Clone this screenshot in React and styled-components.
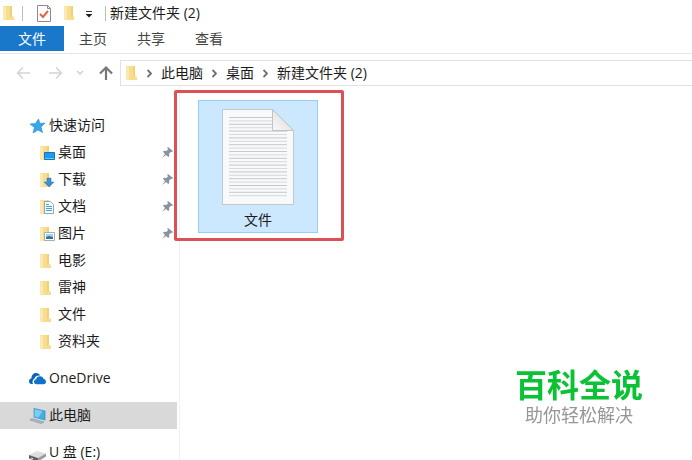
import styled, { createGlobalStyle } from "styled-components";

const GlobalStyle = createGlobalStyle`
  * {
    box-sizing: border-box;
  }
  body {
    margin: 0;
    background: #fff;
    color: #1b1b1b;
    font-family: "Open Sans", "Noto Sans CJK SC", sans-serif;
    font-size: 14px;
  }
  button {
    border: none;
    background: none;
    padding: 0;
    font: inherit;
    color: inherit;
  }
  svg {
    display: block;
    flex: none;
  }
`;
const Window = styled.div`
  display: flex;
  flex-direction: column;
  height: 100vh;
  overflow: hidden;
`;
const TitleBar = styled.header`
  display: flex;
  align-items: center;
  height: 26px;
  padding-left: 1px;
`;
const QuickTools = styled.div`
  display: flex;
  align-items: center;
  gap: 11px;
  padding: 0 12px 0 14px;
`;
const Divider = styled.span`
  width: 1px;
  height: 15px;
  background: #bdbdbd;
  margin-left: ${(props) => (props.$first ? "8px" : "0")};
`;
const Title = styled.h1`
  margin: 0 0 0 4px;
  font-size: 14px;
  line-height: 26px;
  font-weight: 400;
`;
const Tabs = styled.nav`
  display: flex;
  height: 28px;
  padding-bottom: 2px;
  border-bottom: 1px solid #e6e6e6;
`;
const Tab = styled.button`
  width: ${(props) => (props.$active ? "64px" : "58px")};
  height: 25px;
  line-height: 25px;
  color: ${(props) => (props.$active ? "#fff" : "#444")};
  background: ${(props) => (props.$active ? "#1a78cb" : "none")};
`;
const AddressRow = styled.div`
  display: flex;
  align-items: center;
  padding-top: 6px;
`;
const NavButtons = styled.div`
  display: flex;
  align-items: center;
  gap: 14px;
  width: 120px;
  padding-left: 16px;
`;
const AddressBar = styled.div`
  flex: 1;
  display: flex;
  align-items: center;
  gap: 9px;
  height: 26px;
  padding-left: 3px;
  border: 1px solid #e2e2e2;
  border-right: none;
`;
const Crumb = styled.button`
  line-height: 24px;
`;
const Main = styled.div`
  flex: 1;
  display: flex;
  min-height: 0;
`;
const Sidebar = styled.nav`
  width: 180px;
  flex: none;
  display: flex;
  flex-direction: column;
  gap: 10px;
  padding: 26px 2px 0 0;
  border-right: 1px solid #f1f1f1;
`;
const Group = styled.div`
  display: flex;
  flex-direction: column;
`;
const Row = styled.a`
  display: flex;
  align-items: center;
  flex: none;
  gap: 2px;
  height: 27px;
  padding: 0 3px 0 ${(props) => (props.$child ? "38px" : "29px")};
  color: inherit;
  text-decoration: none;
  background: ${(props) => (props.$selected ? "#d9d9d9" : "none")};
`;
const RowLabel = styled.span`
  flex: 1;
  line-height: 26px;
  padding-bottom: 1px;
`;
const Content = styled.main`
  flex: 1;
  padding: 14px 18px;
`;
const FileTile = styled.button`
  position: relative;
  display: flex;
  flex-direction: column;
  align-items: center;
  gap: 4px;
  width: 120px;
  height: 133px;
  padding-top: 8px;
  border: 1px solid #99cdf5;
  background: #cce8ff;
`;
const FileName = styled.span`
  line-height: 20px;
`;
const Highlight = styled.span`
  position: absolute;
  inset: -11px -27px -9px -25px;
  border: 3px solid #dd5156;
  border-radius: 2px;
`;
const Watermark = styled.aside`
  position: fixed;
  right: 49px;
  bottom: 34px;
  display: flex;
  flex-direction: column;
  align-items: center;
  font-family: "Noto Sans CJK SC", sans-serif;
`;
const Brand = styled.strong`
  color: #0bc134;
  font-size: 32px;
  line-height: 38px;
  font-weight: 700;
`;
const Slogan = styled.span`
  color: #969696;
  font-size: 18px;
  line-height: 24px;
`;

const FolderShape = () => (
  <>
    <path d="M2 2h9v10l2 1v3H2z" fill="#f9dd8f" />
    <path d="M2 2l3 1v13.500L2 16z" fill="#fbe9b2" />
    <path d="M9 2h2v10l-2 1z" fill="#f3cf76" />
  </>
);
const BADGES = {
  desktop: (
    <>
      <path d="M6.500 8.500h10v7h-10z" fill="#1e9bec" stroke="#1377bd" />
      <path d="M7 14.500h9" stroke="#6bc7fa" />
    </>
  ),
  download: (
    <path d="M9 7h4v4h3l-5 5-5-5h3z" fill="#3c8fd6" stroke="#2c75b6" strokeWidth=".5" />
  ),
  document: (
    <>
      <path d="M6.500 3.500h6l3 3v9h-9z" fill="#f4faff" stroke="#7697ad" strokeWidth=".8" />
      <path d="M8 6.500h3M8 8.500h6M8 10.500h6M8 12.500h6" stroke="#4f9dcc" />
    </>
  ),
  picture: (
    <>
      <path d="M6.500 7.500h10v8h-10z" fill="#fff" stroke="#9eb0bc" />
      <path d="M8 9h7v5H8z" fill="#9bd2f2" />
      <path d="M8 12l3-1 4 1v2H8z" fill="#38719c" />
    </>
  ),
};
const FolderIcon = ({ kind, width = 18 }) => (
  <svg width={width} height="18" viewBox={`0 0 ${width} 18`}>
    <FolderShape />
    {BADGES[kind]}
  </svg>
);
const PinIcon = () => (
  <svg width="13" height="13" viewBox="0 0 13 13">
    <path
      d="M7 1l5 4-1 1-1-.3-2 2 .3 2.300-1 1-2.300-2L1 12l3-4-2-2.300 1-1 2.300.3 2-2L6 2z"
      fill="#87939d"
    />
  </svg>
);
const StarIcon = () => (
  <svg width="18" height="18" viewBox="0 0 18 18">
    <path
      d="M9.500 2l1.500 4.500 5-.5-4 4 1.500 5.500L9 13l-5 3 1.500-5.500L1 7l5.500-.5z"
      fill="#37a7ec"
      stroke="#2187cc"
      strokeWidth=".6"
    />
  </svg>
);
const CloudIcon = () => (
  <svg width="18" height="18" viewBox="0 0 18 18">
    <path
      d="M0 11.500C0 10 1 8.500 2.500 8.300 2.500 5 4.500 3 7 3c2 0 3.500 1 4.300 2.500C8 5 6 6.500 5.300 8.700 3.500 9.500 3 12 4 14H2.500C1 14 0 13 0 11.500z"
      fill="#0f62b5"
    />
    <path
      d="M5 12c0-1.500 1-2.500 2.300-2.700C7.300 7.500 9 6.300 11 6.300c2 0 3.300 1.200 3.600 2.800C16 9.300 17 10.300 17 11.800c0 1.500-1 2.400-2.300 2.400H7.500C6 14.200 5 13.300 5 12z"
      fill="#0f72ca"
    />
  </svg>
);
const ComputerIcon = () => (
  <svg width="18" height="18" viewBox="0 0 18 18">
    <path d="M5 1.500l11 2.500v9L5 10z" fill="#42aee8" stroke="#3584b5" strokeWidth=".7" />
    <path d="M5.500 2.200l8 1.800-4 6.500-4-1z" fill="#7ccdf4" />
    <path d="M3 11.500l12 3.500-3 1.500L1 13z" fill="#a9bac7" stroke="#73899a" strokeWidth=".5" />
  </svg>
);
const DriveIcon = () => (
  <svg width="18" height="18" viewBox="0 0 18 18">
    <path d="M0 11l8-4 9 2.500L9 14z" fill="#dedede" />
    <path d="M0 11l9 3v3.500l-9-3z" fill="#606060" />
    <path d="M9 14l8-4.500v3L9 17.500z" fill="#999" />
    <path d="M2 14l2 .7" stroke="#e4f2e6" />
  </svg>
);
const TaskIcon = () => (
  <svg width="14" height="17" viewBox="0 0 14 17">
    <path d="M.5.5h10l3 3v13H.5z" fill="#fff" stroke="#8b8b8b" />
    <path d="M10.500.5v3h3" fill="none" stroke="#8b8b8b" />
    <path d="M3 9l3 3 5-6" fill="none" stroke="#df6540" strokeWidth="2" />
  </svg>
);
const MenuIcon = () => (
  <svg width="8" height="10" viewBox="0 0 8 10">
    <path d="M1 3.500h6" stroke="#333" />
    <path d="M.5 6h7L4 9.500z" fill="#222" />
  </svg>
);
const ARROWS = {
  left: "M14 8H1M7 2.500L1.500 8 7 13.500",
  right: "M3 8h13M10 2.500l5.500 5.500-5.500 5.500",
  up: "M8 15V3M2 8.500l6-6 6 6",
};
const Arrow = ({ to }) => (
  <svg width="16" height="16" viewBox="0 0 16 16">
    <path
      d={ARROWS[to]}
      fill="none"
      stroke={to === "up" ? "#777" : "#d3d3d3"}
      strokeWidth={to === "up" ? 2.2 : 1.5}
    />
  </svg>
);
const ChevronDown = () => (
  <svg width="8" height="8" viewBox="0 0 8 8">
    <path d="M1 2l3 3 3-3" fill="none" stroke="#d0d0d0" strokeWidth="1.500" />
  </svg>
);
const ChevronRight = () => (
  <svg width="5" height="9" viewBox="0 0 5 9">
    <path d="M.5 1L4 4.500.5 8" fill="none" stroke="#6e6e6e" strokeWidth="1.800" />
  </svg>
);
const PaperIcon = () => (
  <svg width="72" height="97" viewBox="0 0 72 97">
    <defs>
      <linearGradient id="fold" x1="0" y1="1" x2="1" y2="0">
        <stop offset="0" stopColor="#fafafa" />
        <stop offset="1" stopColor="#d4d4d4" />
      </linearGradient>
    </defs>
    <path d="M.5.5h50l21 21v74H.5z" fill="#f8f9fa" stroke="#c2c7ca" />
    {Array.from({ length: 24 }, (_, i) => (
      <path
        key={i}
        d={`M7 ${8.5 + i * 3.4}h${i < 4 ? 43 : 58}`}
        stroke={i % 2 ? "#d3d5d7" : "#bfc2c4"}
        strokeWidth=".9"
      />
    ))}
    <path d="M50.500.5l21 21h-21z" fill="url(#fold)" stroke="#bfc2c4" />
  </svg>
);

const folders = [
  { name: "桌面", kind: "desktop", pinned: true },
  { name: "下载", kind: "download", pinned: true },
  { name: "文档", kind: "document", pinned: true },
  { name: "图片", kind: "picture", pinned: true },
  { name: "电影" },
  { name: "雷神" },
  { name: "文件" },
  { name: "资料夹" },
];
const tabs = ["文件", "主页", "共享", "查看"];
const crumbs = ["此电脑", "桌面", "新建文件夹 (2)"];

export default function App() {
  return (
    <>
      <GlobalStyle />
      <Window>
        <TitleBar>
          <FolderIcon width={13} />
          <Divider $first />
          <QuickTools>
            <button aria-label="属性">
              <TaskIcon />
            </button>
            <button aria-label="新建文件夹">
              <FolderIcon width={12} />
            </button>
            <button aria-label="自定义快速访问工具栏">
              <MenuIcon />
            </button>
          </QuickTools>
          <Divider />
          <Title>新建文件夹 (2)</Title>
        </TitleBar>
        <Tabs>
          {tabs.map((tab, i) => (
            <Tab key={tab} $active={i === 0}>
              {tab}
            </Tab>
          ))}
        </Tabs>
        <AddressRow>
          <NavButtons>
            <button aria-label="后退">
              <Arrow to="left" />
            </button>
            <button aria-label="前进">
              <Arrow to="right" />
            </button>
            <button aria-label="最近位置">
              <ChevronDown />
            </button>
            <button aria-label="向上">
              <Arrow to="up" />
            </button>
          </NavButtons>
          <AddressBar>
            <FolderIcon width={14} />
            {crumbs.map((crumb) => [
              <ChevronRight key={crumb + "-sep"} />,
              <Crumb key={crumb}>{crumb}</Crumb>,
            ])}
          </AddressBar>
        </AddressRow>
        <Main>
          <Sidebar>
            <Group>
              <Row href="#quick">
                <StarIcon />
                <RowLabel>快速访问</RowLabel>
              </Row>
              {folders.map((folder) => (
                <Row key={folder.name} href={"#" + folder.name} $child>
                  <FolderIcon kind={folder.kind} />
                  <RowLabel>{folder.name}</RowLabel>
                  {folder.pinned && <PinIcon />}
                </Row>
              ))}
            </Group>
            <Row href="#onedrive">
              <CloudIcon />
              <RowLabel>OneDrive</RowLabel>
            </Row>
            <Row href="#computer" $selected>
              <ComputerIcon />
              <RowLabel>此电脑</RowLabel>
            </Row>
            <Row href="#usb">
              <DriveIcon />
              <RowLabel>U 盘 (E:)</RowLabel>
            </Row>
          </Sidebar>
          <Content>
            <FileTile>
              <PaperIcon />
              <FileName>文件</FileName>
              <Highlight />
            </FileTile>
          </Content>
        </Main>
        <Watermark>
          <Brand>百科全说</Brand>
          <Slogan>助你轻松解决</Slogan>
        </Watermark>
      </Window>
    </>
  );
}
